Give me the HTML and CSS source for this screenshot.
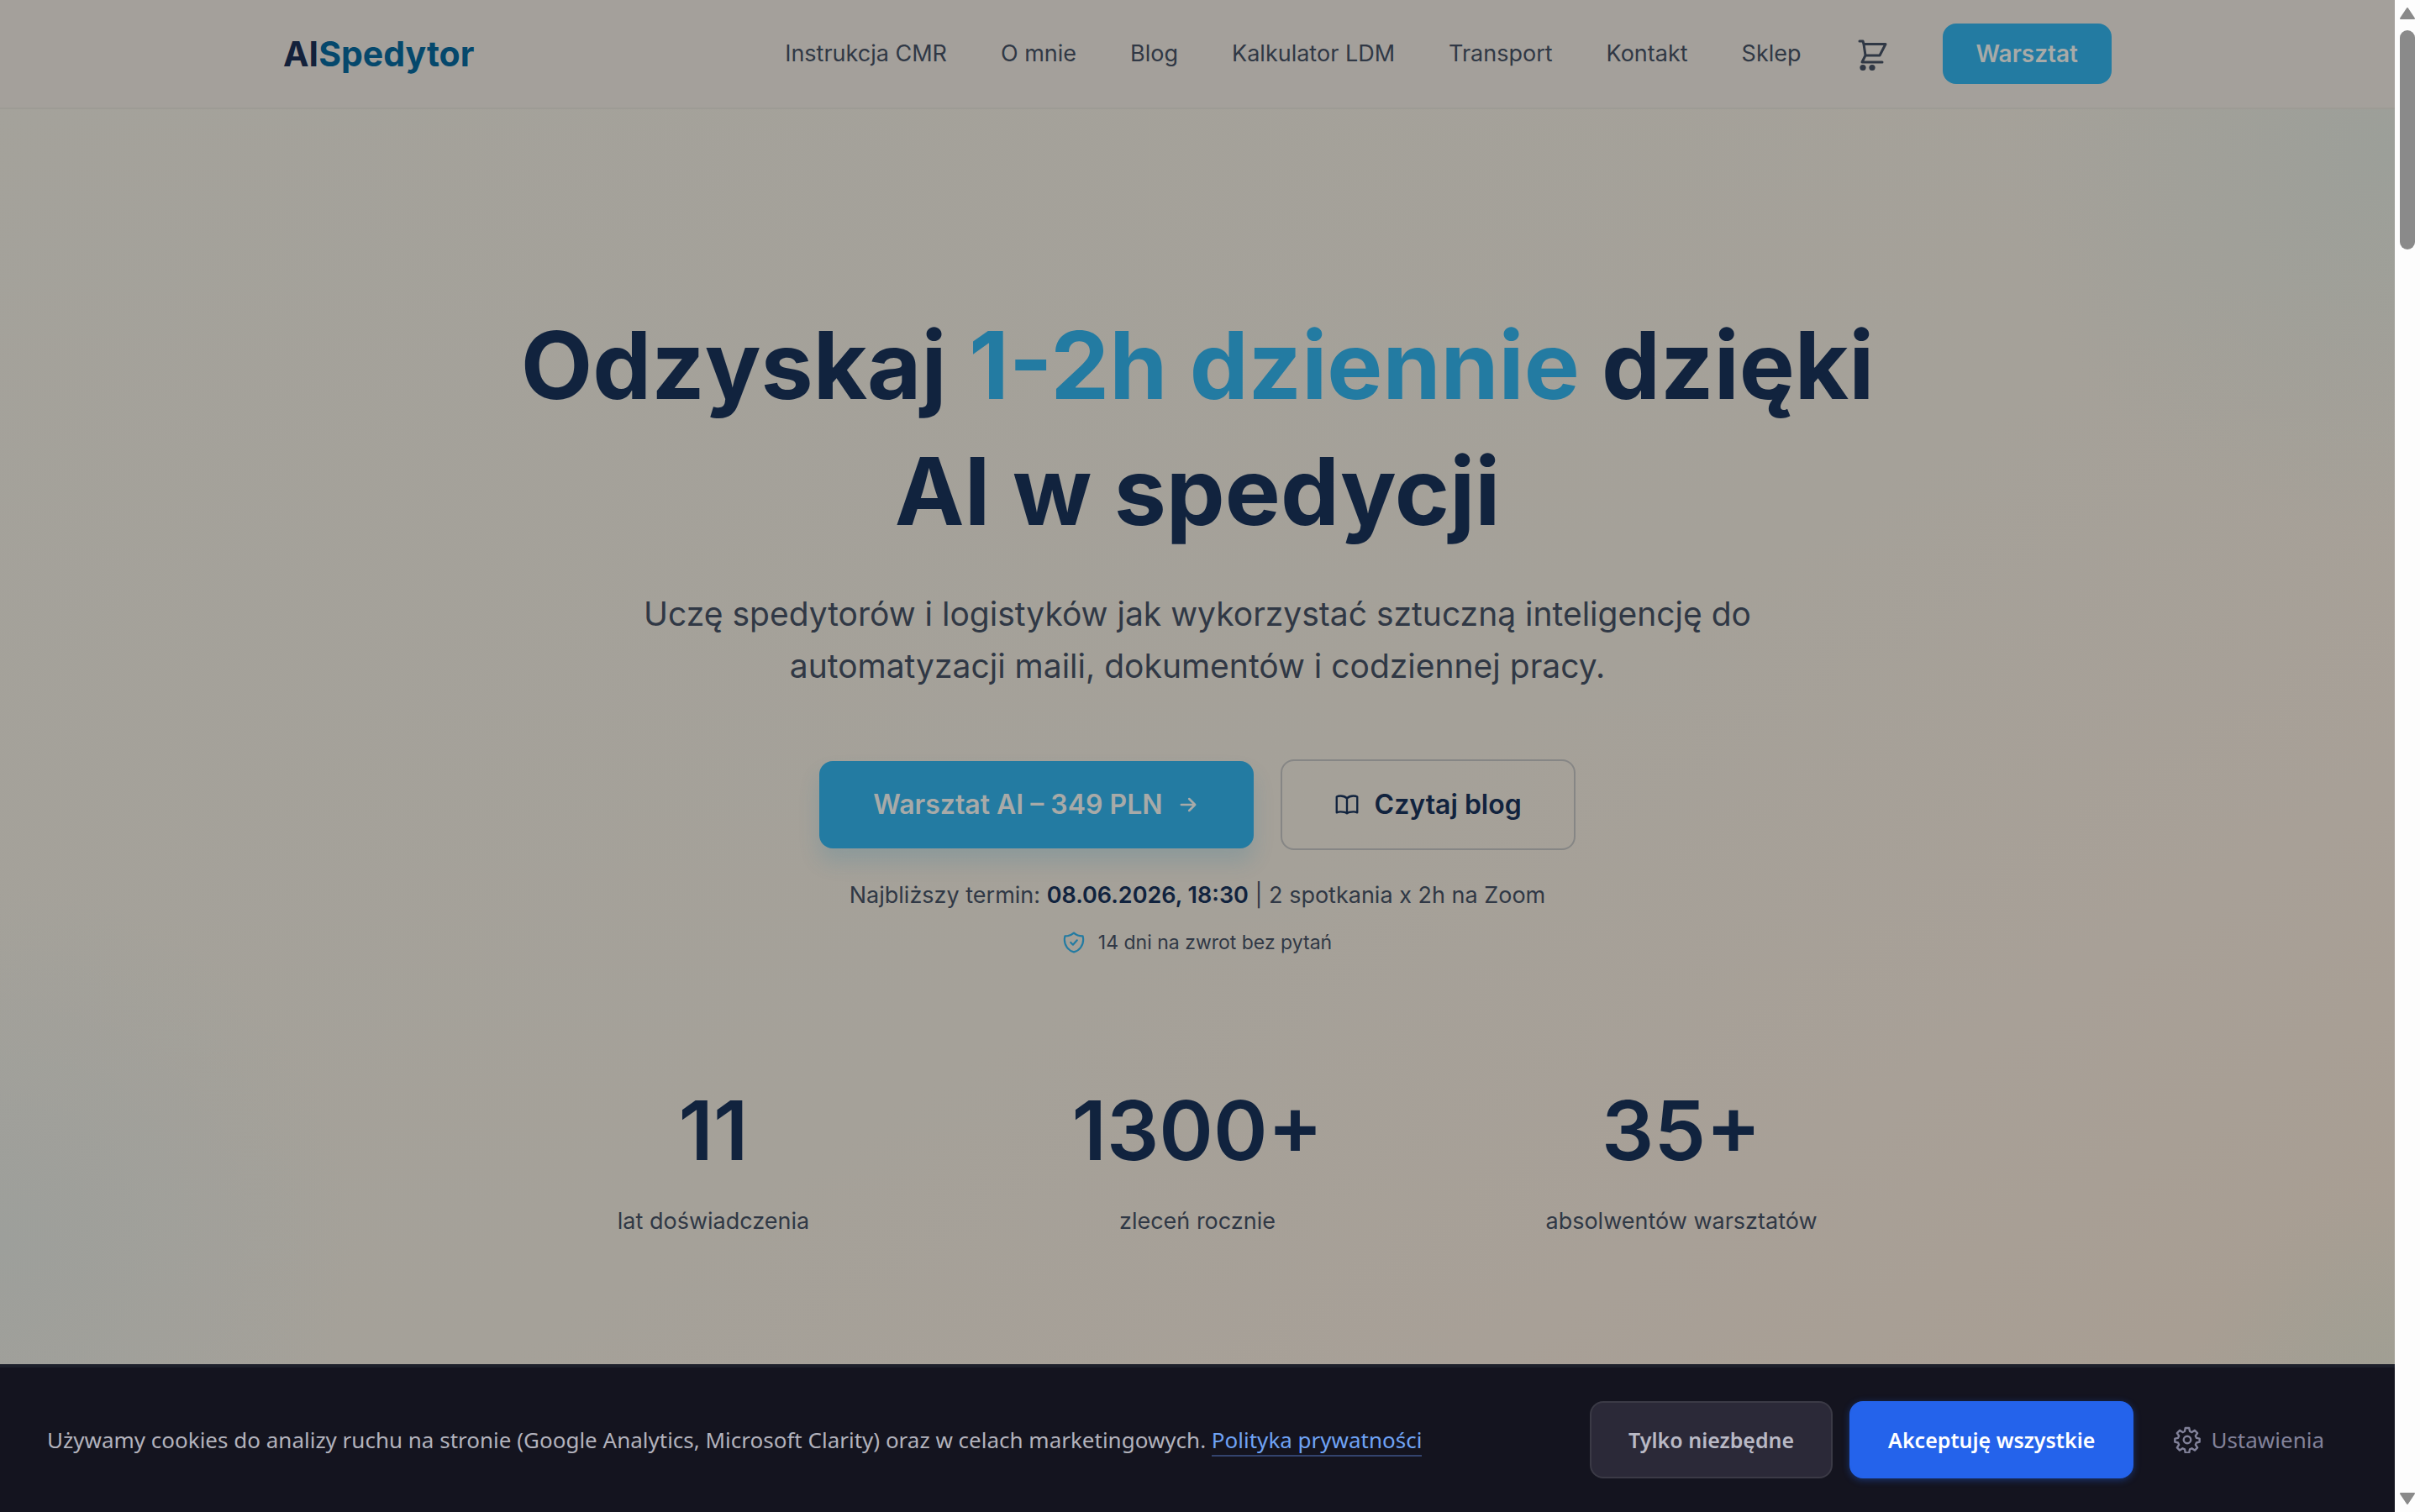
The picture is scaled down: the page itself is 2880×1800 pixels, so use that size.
FILE: index.html
```
<!DOCTYPE html>
<html lang="pl">
<head>
    <meta charset="UTF-8">
    <meta name="viewport" content="width=device-width, initial-scale=1">
    <title>AISpedytor</title>
    <link rel="stylesheet" href="styles.css">
</head>
<body>
    <div class="page">
        <header class="header">
            <div class="container">
                <a href="#" class="logo">AI<span>Spedytor</span></a>
                <nav class="nav">
                    <a href="#">Instrukcja CMR</a>
                    <a href="#">O mnie</a>
                    <a href="#">Blog</a>
                    <a href="#">Kalkulator LDM</a>
                    <a href="#">Transport</a>
                    <a href="#">Kontakt</a>
                    <a href="#">Sklep</a>
                    <a href="#" class="cart" aria-label="Koszyk">
                        <svg viewBox="0 0 40 44" fill="none" stroke="currentColor" stroke-width="3" stroke-linecap="round" stroke-linejoin="round">
                            <path d="M5 7h4l1 3.500h26L29 24H12L10 10.500M12 24l-4 8h24"/>
                            <circle cx="9" cy="38.500" r="3.600" fill="currentColor" stroke="none"/>
                            <circle cx="20" cy="38.500" r="3.600" fill="currentColor" stroke="none"/>
                        </svg>
                    </a>
                    <a href="#" class="nav-btn">Warsztat</a>
                </nav>
            </div>
        </header>

        <main class="hero">
            <h1>Odzyskaj <span>1-2h dziennie</span> dzięki<br>AI w spedycji</h1>
            <p class="lead">Uczę spedytorów i logistyków jak wykorzystać sztuczną inteligencję do<br>automatyzacji maili, dokumentów i codziennej pracy.</p>

            <div class="actions">
                <a href="#" class="btn btn-primary">
                    Warsztat AI – 349 PLN
                    <svg viewBox="0 0 24 24" fill="none" stroke="currentColor" stroke-width="2.200" stroke-linecap="round" stroke-linejoin="round">
                        <path d="M5 12h14M13 6l6 6-6 6"/>
                    </svg>
                </a>
                <a href="#" class="btn btn-outline">
                    <svg viewBox="0 0 24 24" fill="none" stroke="currentColor" stroke-width="2" stroke-linecap="round" stroke-linejoin="round">
                        <path d="M12 5.500C10.500 4 8 3 5.500 3 4 3 2.500 3.300 1.500 3.800V20c1-.5 2.500-.8 4-.8 2.500 0 5 .2 6.500 1.700M12 5.500C13.500 4 16 3 18.500 3c1.500 0 3 .3 4 .8V20c-1-.5-2.500-.8-4-.8-2.500 0-5 .2-6.500 1.700M12 5.500v15.400"/>
                    </svg>
                    Czytaj blog
                </a>
            </div>

            <p class="term">Najbliższy termin: <strong>08.06.2026, 18:30</strong> | 2 spotkania x 2h na Zoom</p>
            <p class="refund">
                <svg viewBox="0 0 24 24" fill="none" stroke="currentColor" stroke-width="2" stroke-linecap="round" stroke-linejoin="round">
                    <path d="M12 1.500c-2.600 2.400-6 3.600-9.800 3.500C1.900 6.300 1.700 7.600 1.700 9c0 6.500 4.300 11.900 10.300 13.500C18 20.900 22.300 15.500 22.300 9c0-1.400-.2-2.700-.5-4-3.800.1-7.200-1.100-9.800-3.500z"/>
                    <path d="M8.500 12l2.500 2.500 4.500-5"/>
                </svg>
                14 dni na zwrot bez pytań
            </p>

            <div class="stats">
                <div class="stat"><strong>11</strong><span>lat doświadczenia</span></div>
                <div class="stat"><strong>1300+</strong><span>zleceń rocznie</span></div>
                <div class="stat"><strong>35+</strong><span>absolwentów warsztatów</span></div>
            </div>
        </main>

        <section class="cookies" aria-label="Cookies">
            <p>Używamy cookies do analizy ruchu na stronie (Google Analytics, Microsoft Clarity) oraz w celach marketingowych. <a href="#">Polityka prywatności</a></p>
            <div class="cookie-actions">
                <button type="button" class="cookie-btn reject">Tylko niezbędne</button>
                <button type="button" class="cookie-btn accept">Akceptuję wszystkie</button>
                <button type="button" class="cookie-btn settings">
                    <svg viewBox="0 0 24 24" fill="none" stroke="currentColor" stroke-width="1.800" stroke-linejoin="round">
                        <path d="M10.300 1.500h3.400l.6 3 1.800.8 2.600-1.700 2.400 2.400-1.700 2.600.8 1.800 2.800.6v3l-2.800.6-.8 1.800 1.700 2.600-2.400 2.400-2.600-1.700-1.800.8-.6 3h-3.400l-.6-3-1.800-.8-2.600 1.700-2.400-2.400 1.700-2.600-.8-1.800-2.800-.6v-3l2.800-.6.8-1.800-1.700-2.600 2.400-2.400 2.600 1.700 1.800-.8z"/>
                        <circle cx="12" cy="12" r="3.200"/>
                    </svg>
                    Ustawienia
                </button>
            </div>
        </section>
    </div>

    <div class="scrollbar" aria-hidden="true">
        <svg viewBox="0 0 18 14"><path d="M9 1L17 13H1z"/></svg>
        <div class="thumb"></div>
        <svg class="down" viewBox="0 0 18 14"><path d="M9 13L1 1h16z"/></svg>
    </div>
</body>
</html>
```

FILE: styles.css
```
* {
    box-sizing: border-box;
    margin: 0;
    padding: 0;
}

body {
    display: flex;
    height: 100vh;
    overflow: hidden;
    font-family: Inter, "Liberation Sans", sans-serif;
    font-size: 27px;
    line-height: 44px;
    color: #303845;
}

a {
    color: inherit;
    text-decoration: none;
}

.page {
    flex: 1;
    min-width: 0;
    display: flex;
    flex-direction: column;
    background:
        radial-gradient(circle 460px at 100% 10%, #9c9f99 0%, #9c9f9900 100%),
        radial-gradient(circle 420px at 0% 82%, #9d9f9b 0%, #9d9f9b00 100%),
        radial-gradient(circle 240px at 100% 92%, #a09f93 0%, #a09f9300 100%),
        linear-gradient(to bottom right, #a4a29b 0%, #a5a199 55%, #a8a097 76%, #a89e93 90%, #a59f94 100%);
}

/* Header */
.header {
    background-color: #a4a09b;
    border-bottom: 2px solid #9d9b95;
}

.container {
    display: flex;
    align-items: center;
    justify-content: space-between;
    max-width: 2176px;
    height: 128px;
    margin: 0 auto;
}

.logo {
    font-size: 41px;
    font-weight: 700;
    color: #13213b;
}

.logo span {
    color: #05486c;
}

.nav {
    display: flex;
    align-items: center;
    gap: 64px;
}

.cart svg {
    display: block;
    width: 40px;
    height: 44px;
}

.nav-btn {
    padding: 14px 40px;
    border-radius: 16px;
    background-color: #237ba2;
    color: #a8aaa8;
    font-size: 28px;
    font-weight: 600;
}

/* Hero */
.hero {
    flex: 1;
    display: flex;
    flex-direction: column;
    align-items: center;
    padding-top: 230px;
    text-align: center;
}

h1 {
    font-size: 111px;
    line-height: 150px;
    font-weight: 700;
    color: #11233e;
}

h1 span {
    color: #237ba2;
}

.lead {
    margin-top: 40px;
    font-size: 39px;
    line-height: 62px;
}

.actions {
    display: flex;
    align-items: center;
    gap: 32px;
    margin-top: 80px;
}

.btn {
    display: flex;
    align-items: center;
    border-radius: 16px;
    padding: 30px 64px;
    font-size: 32px;
    font-weight: 600;
}

.btn-primary {
    gap: 16px;
    background-color: #237ba2;
    color: #a8aaa8;
    box-shadow: 0 16px 24px #237ba230;
}

.btn-primary svg {
    width: 28px;
    height: 28px;
}

.btn-outline {
    gap: 18px;
    padding: 30px 62px;
    border: 2px solid #868685;
    color: #11233e;
}

.btn-outline svg {
    width: 30px;
    height: 28px;
}

.term {
    margin-top: 32px;
}

.term strong {
    color: #11233e;
    font-weight: 600;
}

.refund {
    display: flex;
    align-items: center;
    gap: 16px;
    margin-top: 12px;
    font-size: 23px;
}

.refund svg {
    width: 26px;
    height: 26px;
    color: #237ba2;
}

.stats {
    display: grid;
    grid-template-columns: repeat(3, 1fr);
    width: 100%;
    max-width: 1728px;
    margin-top: 152px;
}

.stat strong {
    display: block;
    font-size: 98px;
    line-height: 100px;
    font-weight: 600;
    color: #11233e;
}

.stat span {
    display: block;
    margin-top: 36px;
}

/* Cookie banner */
.cookies {
    display: flex;
    align-items: center;
    justify-content: space-between;
    padding: 40px 56px;
    border-top: 4px solid #1d202b;
    background-color: #14141f;
    color: #b2b2bc;
    font-family: "Noto Sans", "Open Sans", sans-serif;
    font-size: 26px;
}

.cookies p a {
    color: #6fa3f5;
    border-bottom: 2px solid #33436d;
}

.cookie-actions {
    display: flex;
    gap: 20px;
}

.cookie-btn {
    display: flex;
    align-items: center;
    height: 92px;
    padding: 0 44px;
    border: 2px solid transparent;
    border-radius: 16px;
    font: inherit;
    font-size: 25px;
    font-weight: 600;
    cursor: pointer;
}

.reject {
    background-color: #2b2938;
    border-color: #3b3a46;
    color: #b9b9c5;
}

.accept {
    background-color: #2463eb;
    border-color: #2463eb;
    color: #ffffff;
    box-shadow: 0 2px 8px #2463eb66;
}

.settings {
    gap: 12px;
    padding: 0 26px;
    background-color: transparent;
    color: #82829a;
    font-size: 26px;
    font-weight: 400;
}

.settings svg {
    width: 32px;
    height: 32px;
}

/* Window scrollbar */
.scrollbar {
    display: flex;
    flex-direction: column;
    align-items: center;
    width: 30px;
    padding: 9px 0;
    background-color: #fdfdfd;
}

.scrollbar svg {
    width: 18px;
    height: 14px;
    fill: #8a8a8a;
    stroke: #8a8a8a;
    stroke-width: 2;
    stroke-linejoin: round;
}

.thumb {
    width: 18px;
    height: 261px;
    margin-top: 13px;
    border-radius: 9px;
    background-color: #8a8a8a;
}

.down {
    margin-top: auto;
}
```
